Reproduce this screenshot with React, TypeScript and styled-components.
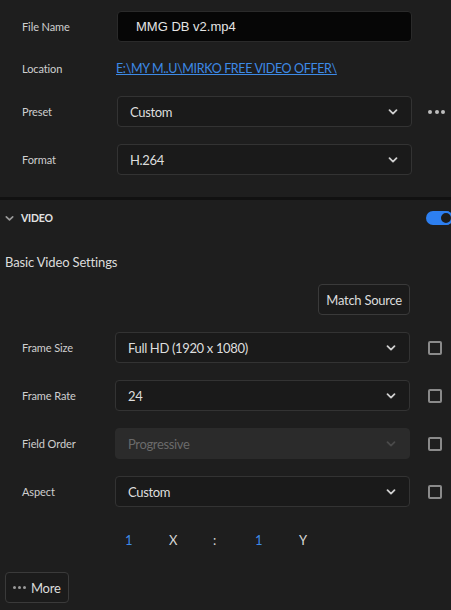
import React from 'react';
import styled, { createGlobalStyle } from 'styled-components';

const GlobalStyle = createGlobalStyle`
  html, body {
    margin: 0;
    padding: 0;
    background: #1e1e1e;
    overflow: hidden;
  }
  body {
    font-family: Lato, "Noto Sans", sans-serif;
    color: #d6d6d6;
  }
`;

const Panel = styled.div`
  width: 451px;
  height: 610px;
  background: #1e1e1e;
  display: flex;
  flex-direction: column;
`;

const TopSection = styled.div`
  padding: 11px 0 22px 0;
  display: flex;
  flex-direction: column;
  border-bottom: 3px solid #111111;
`;

const Row = styled.div<{ $gap?: number; $indent?: number }>`
  display: grid;
  grid-template-columns: ${(p) => p.$indent ?? 117}px 295px 1fr;
  align-items: center;
  height: 31px;
  margin-top: ${(p) => p.$gap ?? 0}px;
`;

const Label = styled.div`
  padding-left: 22px;
  font-size: 11px;
  letter-spacing: -0.1px;
  color: #cfcfcf;
`;

const TextInput = styled.div`
  box-sizing: border-box;
  height: 31px;
  background: #060606;
  border: 1px solid #2a2a2a;
  border-radius: 4px;
  padding-left: 18px;
  display: flex;
  align-items: center;
  font-family: "Liberation Sans", Arial, sans-serif;
  font-size: 13px;
  color: #e4e4e4;
`;

const PathLink = styled.a`
  font-size: 12.5px;
  color: #3d8ae6;
  text-decoration: underline;
  white-space: nowrap;
  letter-spacing: -0.35px;
  margin-left: -1px;
`;

const Select = styled.div<{ $disabled?: boolean }>`
  box-sizing: border-box;
  height: 31px;
  background: ${(p) => (p.$disabled ? '#2b2b2b' : '#1a1a1a')};
  border: 1px solid ${(p) => (p.$disabled ? '#2b2b2b' : '#333333')};
  border-radius: 4px;
  padding: 0 12px 0 12px;
  display: flex;
  align-items: center;
  justify-content: space-between;
  font-size: 13px;
  letter-spacing: -0.35px;
  color: ${(p) => (p.$disabled ? '#6a6a6a' : '#dedede')};
`;

const Chevron: React.FC<{ color?: string; size?: number }> = ({ color = '#cfcfcf', size = 12 }) => (
  <svg width={size} height={size} viewBox="0 0 12 12">
    <path d="M2.5 4.2 L6 7.6 L9.5 4.2" fill="none" stroke={color} strokeWidth="1.8" strokeLinecap="round" strokeLinejoin="round" />
  </svg>
);

const SideCell = styled.div`
  display: flex;
  align-items: center;
  justify-content: flex-end;
  padding-right: 6px;
`;

const Dots = styled.div`
  display: flex;
  gap: 2.5px;
  padding-right: 0;
  span {
    width: 4px;
    height: 4px;
    border-radius: 50%;
    background: #bdbdbd;
  }
`;

const Checkbox = styled.div`
  box-sizing: border-box;
  width: 14px;
  height: 14px;
  border: 2px solid #8a8a8a;
  border-radius: 2px;
  margin-right: 3px;
`;

const SectionHeader = styled.div`
  display: flex;
  align-items: center;
  height: 36px;
  padding-left: 4px;
`;

const HeaderTitle = styled.div`
  font-size: 10.5px;
  font-weight: 700;
  letter-spacing: -0.2px;
  color: #e2e2e2;
  margin-left: 6px;
  flex: 1;
`;

const Toggle = styled.div`
  position: relative;
  width: 27px;
  height: 14px;
  border-radius: 7px;
  background: #2d7ff0;
  margin-right: -2px;
  &::after {
    content: '';
    position: absolute;
    box-sizing: border-box;
    right: 0;
    top: 0;
    width: 14px;
    height: 14px;
    border-radius: 50%;
    background: #1c1c1c;
    border: 2px solid #2d7ff0;
  }
`;

const SubTitle = styled.div`
  padding: 18px 0 0 5px;
  font-size: 13px;
  letter-spacing: -0.15px;
  color: #dcdcdc;
  height: 18px;
`;

const ButtonRow = styled.div`
  display: flex;
  justify-content: flex-end;
  padding-right: 41px;
  margin-top: 12px;
`;

const OutlineButton = styled.button`
  box-sizing: border-box;
  height: 31px;
  padding: 0 7px;
  background: #1b1b1b;
  border: 1px solid #3a3a3a;
  border-radius: 4px;
  font-family: Lato, "Noto Sans", sans-serif;
  font-size: 13px;
  letter-spacing: -0.25px;
  color: #dcdcdc;
  display: flex;
  align-items: center;
  gap: 5px;
`;

const SettingsList = styled.div`
  display: flex;
  flex-direction: column;
  gap: 17px;
  margin-top: 17px;
`;

const RatioRow = styled.div`
  display: grid;
  grid-template-columns: 44px 44px 42px 44px 20px;
  padding-left: 125px;
  margin-top: 23px;
  height: 20px;
  align-items: center;
  font-size: 13px;
  color: #d6d6d6;
`;

const RatioValue = styled.span`
  color: #3d8ae6;
`;

const Footer = styled.div`
  padding: 22px 0 0 5px;
`;

const MoreDots = styled.span`
  display: flex;
  gap: 2px;
  span {
    width: 3px;
    height: 3px;
    border-radius: 50%;
    background: #9a9a9a;
  }
`;

const videoRows = [
  { label: 'Frame Size', value: 'Full HD (1920 x 1080)' },
  { label: 'Frame Rate', value: '24' },
  { label: 'Field Order', value: 'Progressive', disabled: true },
  { label: 'Aspect', value: 'Custom' },
];

const App: React.FC = () => (
  <>
    <GlobalStyle />
    <Panel>
      <TopSection>
        <Row>
          <Label>File Name</Label>
          <TextInput>MMG DB v2.mp4</TextInput>
        </Row>
        <Row $gap={11}>
          <Label>Location</Label>
          <PathLink href="#">E:\MY M..U\MIRKO FREE VIDEO OFFER\</PathLink>
        </Row>
        <Row $gap={12}>
          <Label>Preset</Label>
          <Select>
            Custom
            <Chevron />
          </Select>
          <SideCell>
            <Dots>
              <span />
              <span />
              <span />
            </Dots>
          </SideCell>
        </Row>
        <Row $gap={17}>
          <Label>Format</Label>
          <Select>
            H.264
            <Chevron />
          </Select>
        </Row>
      </TopSection>

      <SectionHeader>
        <Chevron color="#9a9a9a" size={11} />
        <HeaderTitle>VIDEO</HeaderTitle>
        <Toggle />
      </SectionHeader>

      <SubTitle>Basic Video Settings</SubTitle>

      <ButtonRow>
        <OutlineButton>Match Source</OutlineButton>
      </ButtonRow>

      <SettingsList>
        {videoRows.map((r) => (
          <Row key={r.label} $indent={115}>
            <Label>{r.label}</Label>
            <Select $disabled={r.disabled}>
              {r.value}
              <Chevron color={r.disabled ? '#4a4a4a' : '#cfcfcf'} />
            </Select>
            <SideCell>
              <Checkbox />
            </SideCell>
          </Row>
        ))}
      </SettingsList>

      <RatioRow>
        <RatioValue>1</RatioValue>
        <span>X</span>
        <span>:</span>
        <RatioValue>1</RatioValue>
        <span>Y</span>
      </RatioRow>

      <Footer>
        <OutlineButton>
          <MoreDots>
            <span />
            <span />
            <span />
          </MoreDots>
          More
        </OutlineButton>
      </Footer>
    </Panel>
  </>
);

export default App;
